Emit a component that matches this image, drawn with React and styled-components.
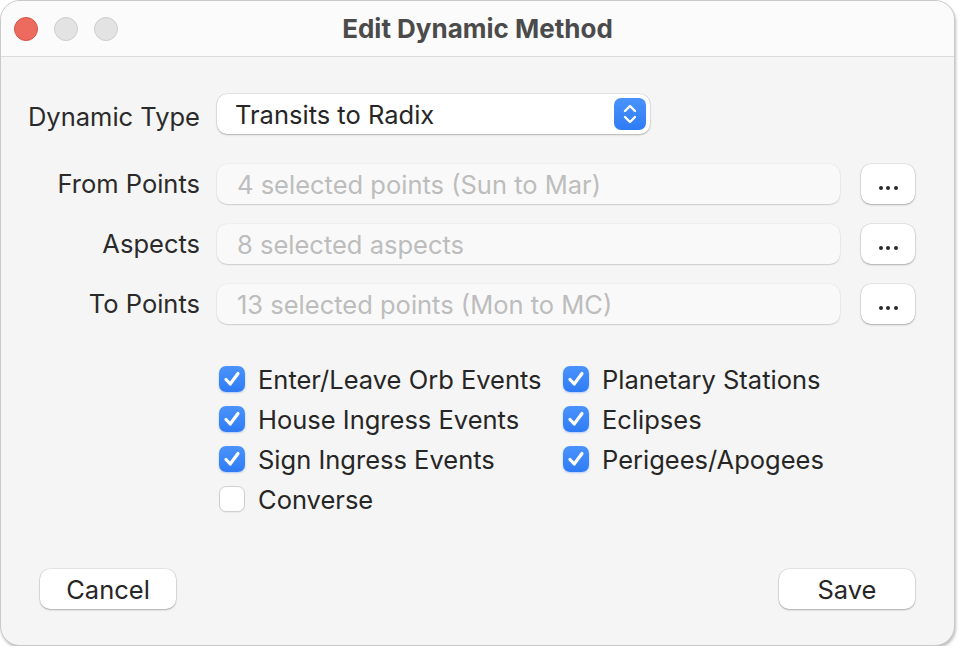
import React from "react";
import styled, { createGlobalStyle } from "styled-components";

const GlobalStyle = createGlobalStyle`
  html, body {
    margin: 0;
    padding: 0;
    background: #ffffff;
  }
  body {
    font-family: Inter, "Noto Sans", "Liberation Sans", sans-serif;
    -webkit-font-smoothing: antialiased;
  }
`;

const Window = styled.div`
  width: 955px;
  height: 646px;
  box-sizing: border-box;
  border: 1px solid #c9c9c9;
  border-radius: 20px;
  background: #f5f5f5;
  overflow: hidden;
  display: flex;
  flex-direction: column;
  box-shadow: 1px 2px 3px rgba(0, 0, 0, 0.25);
`;

const TitleBar = styled.div`
  height: 56px;
  flex-shrink: 0;
  box-sizing: border-box;
  background: #fbfbfb;
  border-bottom: 1px solid #dcdcdc;
  display: flex;
  align-items: center;
  padding-left: 13px;
  position: relative;
`;

const Lights = styled.div`
  display: flex;
  gap: 16px;
`;

const Light = styled.span`
  width: 24px;
  height: 24px;
  border-radius: 50%;
  box-sizing: border-box;
  background: ${({ color }) => color};
  border: 1px solid ${({ edge }) => edge};
`;

const Title = styled.div`
  position: absolute;
  inset: 0;
  display: flex;
  align-items: center;
  justify-content: center;
  font-size: 26px;
  font-weight: 700;
  color: #4b4b4b;
  pointer-events: none;
`;

const Body = styled.div`
  flex: 1;
  display: flex;
  flex-direction: column;
  padding: 37px 39px 0 20px;
`;

const Form = styled.div`
  display: flex;
  flex-direction: column;
  gap: 20px;
`;

const Row = styled.div`
  display: flex;
  align-items: center;
  gap: 17px;
  height: 40px;
  margin-bottom: ${({ first }) => (first ? "10px" : "0")};
`;

const Label = styled.div`
  width: 179px;
  flex-shrink: 0;
  text-align: right;
  font-size: 25.5px;
  color: #2a2a2a;
  line-height: 40px;
  transform: translateY(${({ shift }) => shift || 0}px);
`;

const Popup = styled.div`
  width: 433px;
  height: 40px;
  box-sizing: border-box;
  background: #ffffff;
  border-radius: 10px;
  box-shadow: 0 0 0 0.5px rgba(0, 0, 0, 0.12), 0 1px 2px rgba(0, 0, 0, 0.22);
  display: flex;
  align-items: center;
  justify-content: space-between;
  padding: 0 4px 0 18px;
  font-size: 25.5px;
  color: #262626;
`;

const Stepper = styled.span`
  width: 32px;
  height: 32px;
  border-radius: 7px;
  background: linear-gradient(#4a93fb, #2f7bf5);
  display: flex;
  align-items: center;
  justify-content: center;
`;

const FieldRow = styled.div`
  flex: 1;
  display: flex;
  align-items: center;
  gap: 21px;
`;

const Field = styled.div`
  flex: 1;
  height: 40px;
  box-sizing: border-box;
  background: #f9f9f9;
  border-radius: 10px;
  box-shadow: 0 0 0 0.5px rgba(0, 0, 0, 0.05), 0 1px 1.5px rgba(0, 0, 0, 0.14);
  display: flex;
  align-items: center;
  padding-left: 20px;
  font-size: 25.5px;
  color: #bdbdbd;
`;

const Button = styled.button`
  width: ${({ wide }) => (wide ? "136px" : "54px")};
  height: 40px;
  flex-shrink: 0;
  border: none;
  border-radius: 10px;
  background: #ffffff;
  box-shadow: 0 0 0 0.5px rgba(0, 0, 0, 0.12), 0 1px 2px rgba(0, 0, 0, 0.25);
  font-family: inherit;
  font-size: 25.5px;
  color: #262626;
  display: flex;
  align-items: center;
  justify-content: center;
  padding: 0;
`;

const Dots = styled.span`
  display: flex;
  gap: 3.5px;
  padding-top: 8px;
`;

const Dot = styled.span`
  width: 4px;
  height: 4px;
  border-radius: 50%;
  background: #2a2a2a;
`;

const Checks = styled.div`
  display: grid;
  grid-template-columns: 344px auto;
  grid-auto-rows: 40px;
  margin: 35px 0 0 198px;
`;

const CheckItem = styled.label`
  display: flex;
  align-items: center;
  gap: 13px;
  font-size: 25.5px;
  color: #262626;
`;

const Box = styled.span`
  width: 26px;
  height: 26px;
  box-sizing: border-box;
  border-radius: 7px;
  display: flex;
  align-items: center;
  justify-content: center;
  background: ${({ on }) => (on ? "linear-gradient(#4a93fb, #2f7bf5)" : "#ffffff")};
  border: ${({ on }) => (on ? "none" : "1px solid #cfcfcf")};
  box-shadow: ${({ on }) => (on ? "0 1px 2px rgba(47,123,245,0.35)" : "0 1px 1px rgba(0,0,0,0.05)")};
`;

const Footer = styled.div`
  margin-top: auto;
  margin-bottom: 36px;
  margin-left: 19px;
  display: flex;
  justify-content: space-between;
`;

const CheckMark = () => (
  <svg width="22" height="22" viewBox="0 0 22 22">
    <path d="M5 11.5 L9.2 16 L17 5.5" fill="none" stroke="#fff" strokeWidth="3.2" strokeLinecap="round" strokeLinejoin="round" />
  </svg>
);

const Chevrons = () => (
  <svg width="18" height="26" viewBox="0 0 18 26">
    <path d="M4 10 L9 5 L14 10" fill="none" stroke="#fff" strokeWidth="2.4" strokeLinecap="round" strokeLinejoin="round" />
    <path d="M4 16 L9 21 L14 16" fill="none" stroke="#fff" strokeWidth="2.4" strokeLinecap="round" strokeLinejoin="round" />
  </svg>
);

const MoreButton = () => (
  <Button>
    <Dots>
      <Dot />
      <Dot />
      <Dot />
    </Dots>
  </Button>
);

const rows = [
  { label: "From Points", value: "4 selected points (Sun to Mar)" },
  { label: "Aspects", value: "8 selected aspects" },
  { label: "To Points", value: "13 selected points (Mon to MC)" },
];

const options = [
  { text: "Enter/Leave Orb Events", on: true },
  { text: "Planetary Stations", on: true },
  { text: "House Ingress Events", on: true },
  { text: "Eclipses", on: true },
  { text: "Sign Ingress Events", on: true },
  { text: "Perigees/Apogees", on: true },
  { text: "Converse", on: false },
];

export default function App() {
  return (
    <>
      <GlobalStyle />
      <Window>
        <TitleBar>
          <Lights>
            <Light color="#ed6a5e" edge="#d65347" />
            <Light color="#e3e3e3" edge="#cdcdcd" />
            <Light color="#e3e3e3" edge="#cdcdcd" />
          </Lights>
          <Title>Edit Dynamic Method</Title>
        </TitleBar>
        <Body>
          <Form>
            <Row first>
              <Label shift={3}>Dynamic Type</Label>
              <Popup>
                <span>Transits to Radix</span>
                <Stepper>
                  <Chevrons />
                </Stepper>
              </Popup>
            </Row>
            {rows.map((r) => (
              <Row key={r.label}>
                <Label>{r.label}</Label>
                <FieldRow>
                  <Field>{r.value}</Field>
                  <MoreButton />
                </FieldRow>
              </Row>
            ))}
          </Form>
          <Checks>
            {options.map((o) => (
              <CheckItem key={o.text}>
                <Box on={o.on}>{o.on && <CheckMark />}</Box>
                {o.text}
              </CheckItem>
            ))}
          </Checks>
          <Footer>
            <Button wide>Cancel</Button>
            <Button wide>Save</Button>
          </Footer>
        </Body>
      </Window>
    </>
  );
}
